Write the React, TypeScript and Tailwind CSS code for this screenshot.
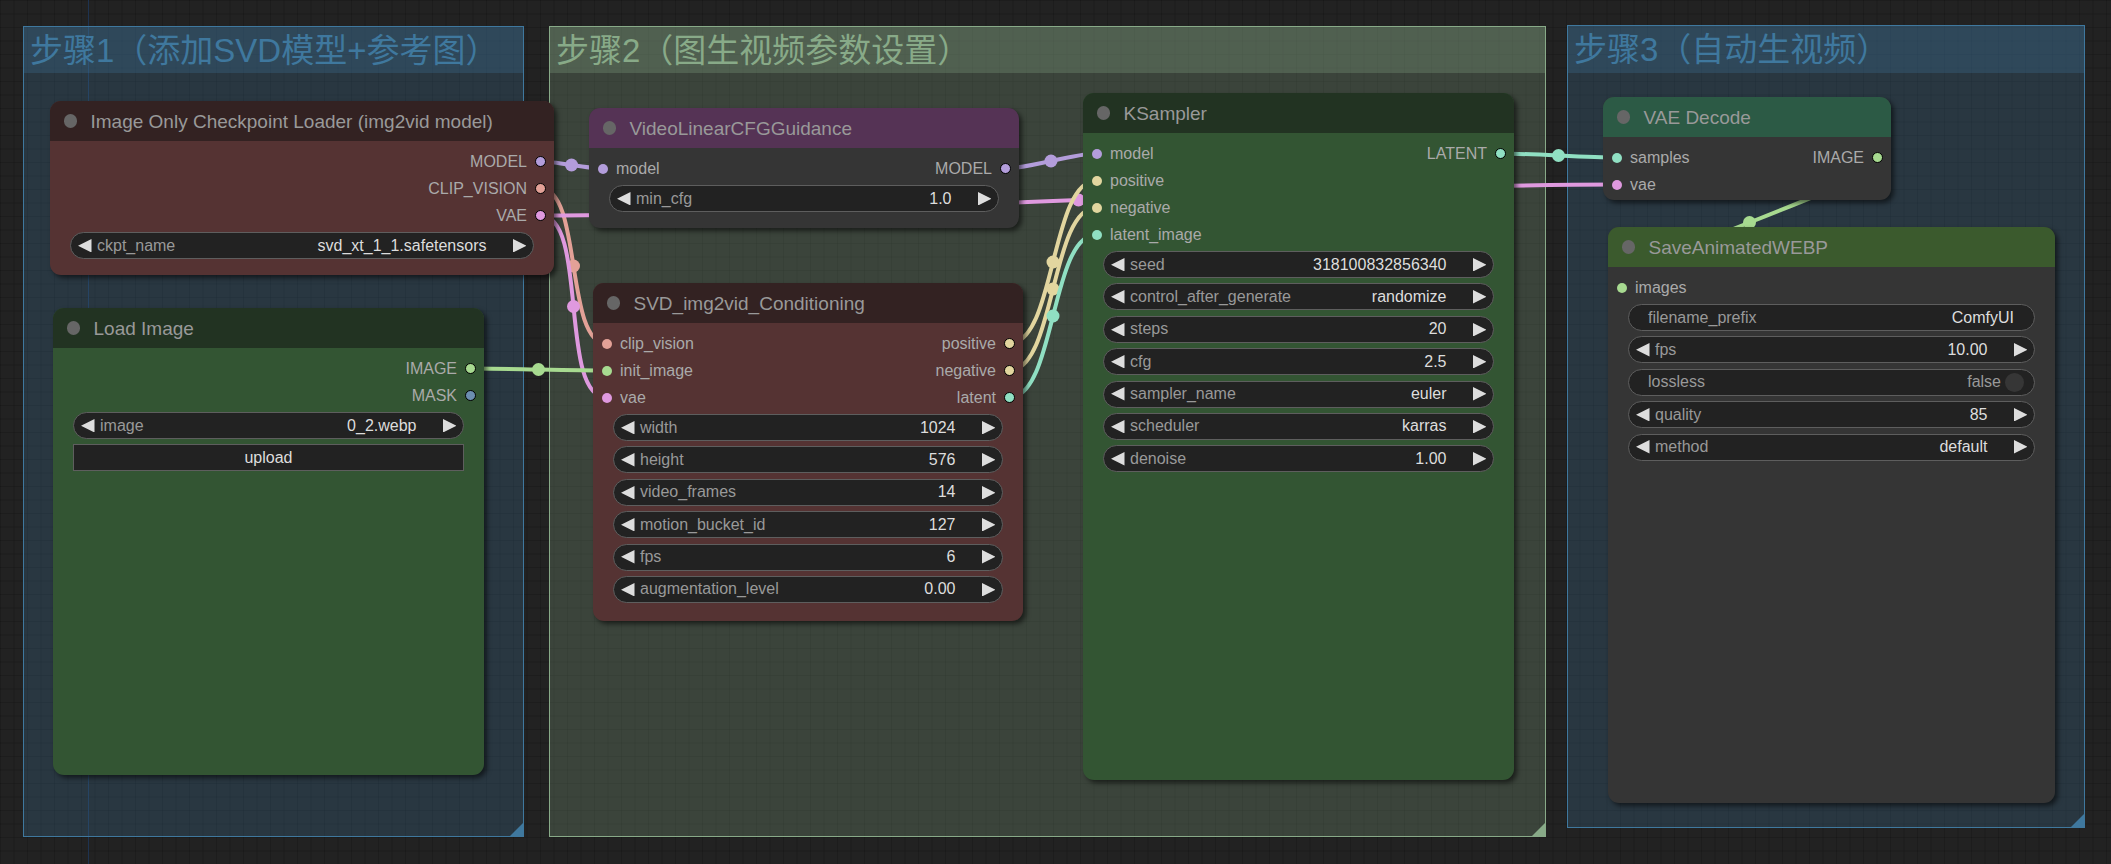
import React from "react";

type Slot = { label: string; dot: string };
type Widget =
  | { kind: "num"; label: string; value: string }
  | { kind: "text"; label: string; value: string }
  | { kind: "toggle"; label: string; value: string }
  | { kind: "button"; label: string };

const DOT = {
  MODEL: "bg-[#b39ddb]",
  CLIP_VISION: "bg-[#e3a197]",
  VAE: "bg-[#df99df]",
  IMAGE: "bg-[#a7da90]",
  MASK: "bg-[#6c8eb0]",
  COND: "bg-[#e2d69f]",
  LATENT: "bg-[#90e0c3]",
};

const LINK = {
  MODEL: "#b39ddb",
  CLIP_VISION: "#e3a197",
  VAE: "#df99df",
  IMAGE: "#a7da90",
  COND: "#e2d69f",
  LATENT: "#90e0c3",
};

function LeftArrow() {
  return (
    <svg viewBox="0 0 10 10" className="w-[13.5px] h-[13.5px] shrink-0">
      <path d="M10 0 L0 5 L10 10 Z" fill="#dddddd" />
    </svg>
  );
}
function RightArrow() {
  return (
    <svg viewBox="0 0 10 10" className="w-[13.5px] h-[13.5px] shrink-0">
      <path d="M0 0 L10 5 L0 10 Z" fill="#dddddd" />
    </svg>
  );
}

function WidgetRow({ w }: { w: Widget }) {
  if (w.kind === "button") {
    return (
      <div className="h-[27px] shrink-0 bg-[#222222] border border-[#5e5e5e] flex items-center justify-center text-[16px] leading-none text-[#dddddd]">
        {w.label}
      </div>
    );
  }
  if (w.kind === "text") {
    return (
      <div className="h-[27px] shrink-0 rounded-full bg-[#222222] border border-[#5e5e5e] flex items-center text-[16px] leading-none">
        <span className="ml-[19px] text-[#999999]">{w.label}</span>
        <span className="ml-auto mr-[20px] text-[#dddddd]">{w.value}</span>
      </div>
    );
  }
  if (w.kind === "toggle") {
    return (
      <div className="h-[27px] shrink-0 rounded-full bg-[#222222] border border-[#5e5e5e] flex items-center text-[16px] leading-none">
        <span className="ml-[19px] text-[#999999]">{w.label}</span>
        <span className="ml-auto text-[#999999]">{w.value}</span>
        <span className="ml-[4px] mr-[10px] w-[19px] h-[19px] rounded-full bg-[#363636]" />
      </div>
    );
  }
  return (
    <div className="h-[27px] shrink-0 rounded-full bg-[#222222] border border-[#5e5e5e] flex items-center text-[16px] leading-none">
      <span className="ml-[7px] flex">
        <LeftArrow />
      </span>
      <span className="ml-[5.5px] text-[#999999] whitespace-nowrap">{w.label}</span>
      <span className="ml-auto text-[#dddddd] whitespace-nowrap">{w.value}</span>
      <span className="ml-[26px] mr-[7px] flex">
        <RightArrow />
      </span>
    </div>
  );
}

function GNode({
  pos,
  title,
  titleBg,
  bodyBg,
  inputs = [],
  outputs = [],
  widgets = [],
}: {
  pos: string;
  title: string;
  titleBg: string;
  bodyBg: string;
  inputs?: Slot[];
  outputs?: Slot[];
  widgets?: Widget[];
}) {
  const rows = Math.max(inputs.length, outputs.length);
  const list = Array.from({ length: rows }, (_, i) => i);
  return (
    <div
      className={`absolute ${pos} flex flex-col rounded-[11px] shadow-[3px_3px_5px_rgba(0,0,0,0.55)] ${bodyBg}`}
    >
      <div className={`h-[40px] shrink-0 flex items-center rounded-t-[11px] ${titleBg}`}>
        <span className="ml-[13.5px] w-[13.5px] h-[13.5px] rounded-full bg-[#666666] shrink-0" />
        <span className="ml-[13.5px] text-[19px] leading-none text-[#999999] whitespace-nowrap">{title}</span>
      </div>
      <div className="flex flex-col pt-[7px]">
        {list.map((i) => {
          const inp = inputs[i];
          const out = outputs[i];
          return (
            <div key={i} className="h-[27px] flex items-center text-[16px] leading-none text-[#aaaaaa]">
              {inp ? (
                <>
                  <span className={`ml-[8.5px] w-[10px] h-[10px] rounded-full shrink-0 ${inp.dot}`} />
                  <span className="ml-[8.5px] whitespace-nowrap">{inp.label}</span>
                </>
              ) : null}
              <span className="flex-1" />
              {out ? (
                <>
                  <span className="whitespace-nowrap">{out.label}</span>
                  <span
                    className={`ml-[8px] mr-[8px] w-[11px] h-[11px] rounded-full border-[1.5px] border-black shrink-0 ${out.dot}`}
                  />
                </>
              ) : null}
            </div>
          );
        })}
        {widgets.length > 0 && (
          <div className="mt-[3px] px-[20px] flex flex-col gap-[5.4px]">
            {widgets.map((w, i) => (
              <WidgetRow key={i} w={w} />
            ))}
          </div>
        )}
      </div>
    </div>
  );
}

function ResizeCorner({ fill }: { fill: string }) {
  return (
    <svg viewBox="0 0 13 13" className="absolute right-0 bottom-0 w-[13px] h-[13px]">
      <path d="M13 0 L13 13 L0 13 Z" fill={fill} />
    </svg>
  );
}

function link(x1: number, y1: number, x2: number, y2: number) {
  const d = Math.hypot(x2 - x1, y2 - y1) * 0.25;
  const c1x = x1 + d;
  const c2x = x2 - d;
  const path = `M${x1} ${y1} C${c1x} ${y1} ${c2x} ${y2} ${x2} ${y2}`;
  const mx = 0.125 * x1 + 0.375 * c1x + 0.375 * c2x + 0.125 * x2;
  const my = 0.5 * y1 + 0.5 * y2;
  return { path, mx, my };
}

const LINKS: [number, number, number, number, string][] = [
  [540.5, 161.5, 602.5, 168.5, LINK.MODEL],
  [540.5, 188.5, 606.5, 343.5, LINK.CLIP_VISION],
  [540.5, 215.5, 606.5, 397.5, LINK.VAE],
  [540.5, 215.5, 1616.5, 184.5, LINK.VAE],
  [470.5, 368.5, 606.5, 370.5, LINK.IMAGE],
  [1005.5, 168.5, 1096.5, 153.5, LINK.MODEL],
  [1009.5, 343.5, 1096.5, 180.5, LINK.COND],
  [1009.5, 370.5, 1096.5, 207.5, LINK.COND],
  [1009.5, 397.5, 1096.5, 234.5, LINK.LATENT],
  [1500.5, 153.5, 1616.5, 157.5, LINK.LATENT],
  [1877.5, 157.5, 1621.5, 287.5, LINK.IMAGE],
];

export default function App() {
  return (
    <div className="relative w-[2111px] h-[864px] overflow-hidden bg-[#222222] bg-[linear-gradient(to_right,rgba(0,0,0,0.16)_1px,transparent_1px),linear-gradient(to_bottom,rgba(0,0,0,0.16)_1px,transparent_1px)] bg-[size:13.5px_13.5px] font-['Liberation_Sans','Noto_Sans_CJK_SC',Arial,sans-serif]">
      <div className="absolute left-[88px] top-0 w-px h-full bg-[#1e3350]" />

      {/* Groups */}
      <div className="absolute left-[23px] top-[26px] w-[501px] h-[811px] border border-[#3f789e] bg-[rgba(63,120,158,0.25)]">
        <div className="h-[46px] bg-[rgba(63,120,158,0.28)] flex items-center pl-[6px] text-[33px] leading-none text-[#3f789e] whitespace-nowrap">
          步骤1（添加SVD模型+参考图）
        </div>
        <ResizeCorner fill="#3f789e" />
      </div>
      <div className="absolute left-[549px] top-[26px] w-[997px] h-[811px] border border-[#88aa88] bg-[rgba(136,170,136,0.25)]">
        <div className="h-[46px] bg-[rgba(136,170,136,0.28)] flex items-center pl-[6px] text-[33px] leading-none text-[#88aa88] whitespace-nowrap">
          步骤2（图生视频参数设置）
        </div>
        <ResizeCorner fill="#88aa88" />
      </div>
      <div className="absolute left-[1567px] top-[25px] w-[518px] h-[803px] border border-[#3f789e] bg-[rgba(63,120,158,0.25)]">
        <div className="h-[47px] bg-[rgba(63,120,158,0.28)] flex items-center pl-[6px] text-[33px] leading-none text-[#3f789e] whitespace-nowrap">
          步骤3（自动生视频）
        </div>
        <ResizeCorner fill="#3f789e" />
      </div>

      {/* Links */}
      <svg className="absolute left-0 top-0 w-[2111px] h-[864px]" viewBox="0 0 2111 864">
        {LINKS.map(([a, b, c, d, col], i) => {
          const l = link(a, b, c, d);
          return (
            <g key={i}>
              <path d={l.path} stroke={col} strokeWidth={4} fill="none" />
              <circle cx={l.mx} cy={l.my} r={6.5} fill={col} />
            </g>
          );
        })}
      </svg>

      {/* Nodes */}
      <GNode
        pos="left-[50px] top-[101px] w-[504px] h-[174px]"
        title="Image Only Checkpoint Loader (img2vid model)"
        titleBg="bg-[#332222]"
        bodyBg="bg-[#553333]"
        outputs={[
          { label: "MODEL", dot: DOT.MODEL },
          { label: "CLIP_VISION", dot: DOT.CLIP_VISION },
          { label: "VAE", dot: DOT.VAE },
        ]}
        widgets={[{ kind: "num", label: "ckpt_name", value: "svd_xt_1_1.safetensors" }]}
      />
      <GNode
        pos="left-[53px] top-[308px] w-[431px] h-[467px]"
        title="Load Image"
        titleBg="bg-[#223322]"
        bodyBg="bg-[#335533]"
        outputs={[
          { label: "IMAGE", dot: DOT.IMAGE },
          { label: "MASK", dot: DOT.MASK },
        ]}
        widgets={[
          { kind: "num", label: "image", value: "0_2.webp" },
          { kind: "button", label: "upload" },
        ]}
      />
      <GNode
        pos="left-[589px] top-[108px] w-[430px] h-[120px]"
        title="VideoLinearCFGGuidance"
        titleBg="bg-[#553355]"
        bodyBg="bg-[#353535]"
        inputs={[{ label: "model", dot: DOT.MODEL }]}
        outputs={[{ label: "MODEL", dot: DOT.MODEL }]}
        widgets={[{ kind: "num", label: "min_cfg", value: "1.0" }]}
      />
      <GNode
        pos="left-[593px] top-[283px] w-[430px] h-[338px]"
        title="SVD_img2vid_Conditioning"
        titleBg="bg-[#332222]"
        bodyBg="bg-[#553333]"
        inputs={[
          { label: "clip_vision", dot: DOT.CLIP_VISION },
          { label: "init_image", dot: DOT.IMAGE },
          { label: "vae", dot: DOT.VAE },
        ]}
        outputs={[
          { label: "positive", dot: DOT.COND },
          { label: "negative", dot: DOT.COND },
          { label: "latent", dot: DOT.LATENT },
        ]}
        widgets={[
          { kind: "num", label: "width", value: "1024" },
          { kind: "num", label: "height", value: "576" },
          { kind: "num", label: "video_frames", value: "14" },
          { kind: "num", label: "motion_bucket_id", value: "127" },
          { kind: "num", label: "fps", value: "6" },
          { kind: "num", label: "augmentation_level", value: "0.00" },
        ]}
      />
      <GNode
        pos="left-[1083px] top-[93px] w-[431px] h-[687px]"
        title="KSampler"
        titleBg="bg-[#223322]"
        bodyBg="bg-[#335533]"
        inputs={[
          { label: "model", dot: DOT.MODEL },
          { label: "positive", dot: DOT.COND },
          { label: "negative", dot: DOT.COND },
          { label: "latent_image", dot: DOT.LATENT },
        ]}
        outputs={[{ label: "LATENT", dot: DOT.LATENT }]}
        widgets={[
          { kind: "num", label: "seed", value: "318100832856340" },
          { kind: "num", label: "control_after_generate", value: "randomize" },
          { kind: "num", label: "steps", value: "20" },
          { kind: "num", label: "cfg", value: "2.5" },
          { kind: "num", label: "sampler_name", value: "euler" },
          { kind: "num", label: "scheduler", value: "karras" },
          { kind: "num", label: "denoise", value: "1.00" },
        ]}
      />
      <GNode
        pos="left-[1603px] top-[97px] w-[288px] h-[103px]"
        title="VAE Decode"
        titleBg="bg-[#2c5a45]"
        bodyBg="bg-[#353535]"
        inputs={[
          { label: "samples", dot: DOT.LATENT },
          { label: "vae", dot: DOT.VAE },
        ]}
        outputs={[{ label: "IMAGE", dot: DOT.IMAGE }]}
      />
      <GNode
        pos="left-[1608px] top-[227px] w-[447px] h-[576px]"
        title="SaveAnimatedWEBP"
        titleBg="bg-[#3b5a2d]"
        bodyBg="bg-[#353535]"
        inputs={[{ label: "images", dot: DOT.IMAGE }]}
        widgets={[
          { kind: "text", label: "filename_prefix", value: "ComfyUI" },
          { kind: "num", label: "fps", value: "10.00" },
          { kind: "toggle", label: "lossless", value: "false" },
          { kind: "num", label: "quality", value: "85" },
          { kind: "num", label: "method", value: "default" },
        ]}
      />
    </div>
  );
}
